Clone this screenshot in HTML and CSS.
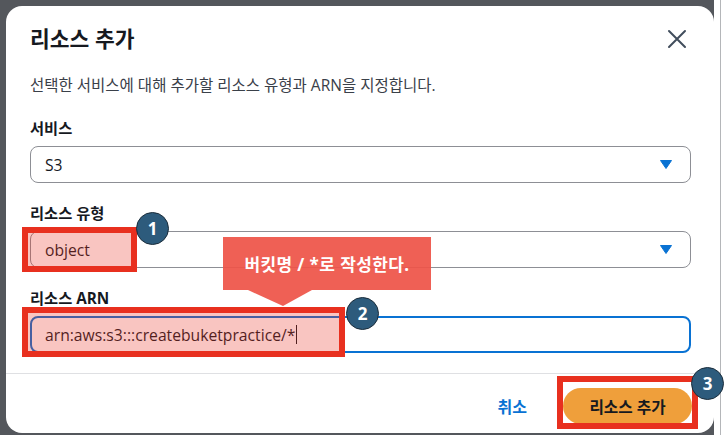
FILE: index.html
```html
<!DOCTYPE html>
<html lang="ko">
<head>
<meta charset="utf-8">
<title>리소스 추가</title>
<link rel="stylesheet" href="styles.css">
</head>
<body>
<div class="stage">
  <div class="dialog">
    <div class="header">
      <h1 class="title">리소스 추가</h1>
      <button class="close" aria-label="닫기">
        <svg width="20" height="20" viewBox="0 0 20 20"><path d="M2 2 L18 18 M18 2 L2 18" stroke="#414d5c" stroke-width="2" stroke-linecap="round" fill="none"/></svg>
      </button>
    </div>
    <div class="content">
      <p class="desc">선택한 서비스에 대해 추가할 리소스 유형과 ARN을 지정합니다.</p>
      <div class="field">
        <div class="label">서비스</div>
        <div class="select">
          <span>S3</span>
          <svg class="caret" width="12" height="9" viewBox="0 0 12 9"><path d="M0.5 0.5 H11.5 L6 8.5 Z" fill="#0972d3" stroke="#0972d3" stroke-linejoin="round"/></svg>
        </div>
      </div>
      <div class="field">
        <div class="label">리소스 유형</div>
        <div class="select">
          <span>object</span>
          <svg class="caret" width="12" height="9" viewBox="0 0 12 9"><path d="M0.5 0.5 H11.5 L6 8.5 Z" fill="#0972d3" stroke="#0972d3" stroke-linejoin="round"/></svg>
        </div>
      </div>
      <div class="field">
        <div class="label">리소스 ARN</div>
        <div class="input"><span>arn:aws:s3:::createbuketpractice/*</span><span class="cursor"></span></div>
      </div>
    </div>
    <div class="footer">
      <button class="cancel">취소</button>
      <button class="primary">리소스 추가</button>
    </div>

    <div class="hl hl-1"></div>
    <div class="hl hl-2"></div>
    <div class="hl hl-3"></div>
    <div class="callout">버킷명 / *로 작성한다.</div>
    <div class="badge badge-1">1</div>
    <div class="badge badge-2">2</div>
    <div class="badge badge-3">3</div>
  </div>
  <div class="edge"></div>
</div>
</body>
</html>
```

FILE: styles.css
```css
* { box-sizing: border-box; }
html, body { margin: 0; padding: 0; }
body {
  background: #54575c;
  font-family: "Open Sans", "Noto Sans CJK KR", sans-serif;
  color: #16191f;
  width: 726px;
  height: 435px;
  overflow: hidden;
}
.stage {
  display: flex;
  height: 435px;
  padding: 6px 0 0 6px;
}
.dialog {
  position: relative;
  width: 708px;
  height: 427px;
  background: #fff;
  border-radius: 16px;
  display: flex;
  flex-direction: column;
}
.edge {
  flex: 1;
  margin-top: -6px;
  height: 435px;
  background: linear-gradient(to right, #fff 0, #fff 6px, #b4b6b9 6px, #b4b6b9 7px, #fff 7px);
}
.header {
  display: flex;
  align-items: center;
  justify-content: space-between;
  padding: 20px 23px 0 24px;
}
.title {
  margin: 0;
  font-size: 21.5px;
  line-height: 26px;
  font-weight: 700;
  color: #16191f;
}
.close {
  border: 0;
  background: none;
  padding: 0;
  width: 24px;
  height: 24px;
  display: flex;
  align-items: center;
  justify-content: center;
  margin-right: 2px;
}
.content {
  padding: 23px 23px 20px 24px;
  display: flex;
  flex-direction: column;
  gap: 20px;
  border-bottom: 1.5px solid #dfe0e3;
}
.desc {
  margin: 0;
  font-size: 15.5px;
  line-height: 20px;
  color: #3a4049;
}
.field {
  display: flex;
  flex-direction: column;
  gap: 8px;
}
.content .field:first-of-type { margin-top: 3px; }
.label {
  font-size: 15.3px;
  line-height: 20px;
  font-weight: 700;
  color: #16191f;
}
.select, .input {
  height: 37px;
  border: 1px solid #8d8f95;
  border-radius: 8px;
  display: flex;
  align-items: center;
  justify-content: space-between;
  padding: 0 18px 0 14px;
  font-size: 15.7px;
  color: #16191f;
}
.input {
  justify-content: flex-start;
  border: 2px solid #0972d3;
  padding-left: 13px;
}
.cursor {
  display: inline-block;
  width: 1px;
  height: 19px;
  background: #16191f;
  margin-left: 1px;
}
.footer {
  display: flex;
  justify-content: flex-end;
  align-items: center;
  gap: 20px;
  padding: 14px 22px 0 24px;
}
.cancel {
  border: 0;
  background: none;
  font-family: inherit;
  font-size: 16px;
  font-weight: 700;
  color: #0972d3;
  padding: 0 16px;
  height: 36px;
}
.primary {
  border: 0;
  font-family: inherit;
  font-size: 15.7px;
  font-weight: 700;
  color: #16191f;
  background: #ef9f3b;
  border-radius: 18px;
  width: 129px;
  height: 36px;
}

/* annotation overlays */
.hl {
  position: absolute;
  border: 6px solid #e8301f;
  background: rgba(232, 48, 31, 0.28);
}
.hl-1 { left: 16px; top: 221px; width: 115px; height: 45px; }
.hl-2 { left: 16px; top: 301px; width: 323px; height: 50px; }
.hl-3 { left: 551px; top: 370px; width: 141px; height: 53px; background: none; }

.callout {
  position: absolute;
  left: 217px;
  top: 231px;
  width: 208px;
  height: 53px;
  background: rgba(238, 84, 72, 0.93);
  color: #fff;
  font-size: 17px;
  font-weight: 700;
  display: flex;
  align-items: center;
  justify-content: center;
  letter-spacing: 0.4px;
}
.callout::after {
  content: "";
  position: absolute;
  left: 25px;
  top: 53px;
  border-top: 16px solid rgba(238, 84, 72, 0.93);
  border-left: 35px solid transparent;
  border-right: 29px solid transparent;
}
.badge {
  position: absolute;
  width: 33px;
  height: 33px;
  border-radius: 50%;
  background: #2d5b7c;
  border: 1.5px solid #1b2d3b;
  color: #fff;
  font-size: 17px;
  font-weight: 700;
  display: flex;
  align-items: center;
  justify-content: center;
}
.badge-1 { left: 130px; top: 206px; }
.badge-2 { left: 340px; top: 291px; }
.badge-3 { left: 685px; top: 361px; }
```
